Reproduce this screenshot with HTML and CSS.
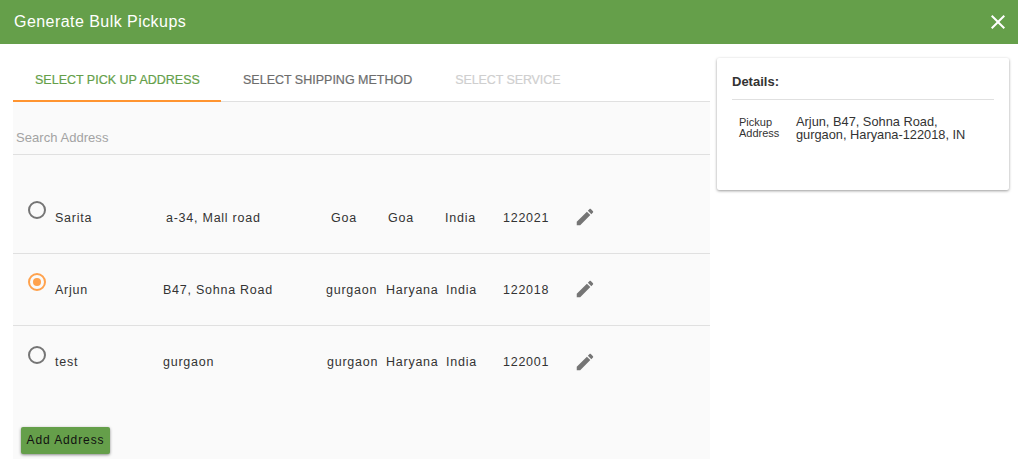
FILE: index.html
```html
<!DOCTYPE html>
<html lang="en">
<head>
<meta charset="utf-8">
<title>Generate Bulk Pickups</title>
<link rel="stylesheet" href="styles.css">
</head>
<body>
<header class="topbar">
  <h1 class="topbar-title">Generate Bulk Pickups</h1>
  <button class="close-btn" aria-label="Close">
    <svg viewBox="0 0 24 24" width="24" height="24"><path d="M19 6.41 17.59 5 12 10.59 6.41 5 5 6.41 10.59 12 5 17.59 6.41 19 12 13.41 17.59 19 19 17.59 13.41 12z"/></svg>
  </button>
</header>
<main class="layout">
  <section class="left">
    <nav class="tabs">
      <div class="tab tab-active">Select Pick Up Address</div>
      <div class="tab tab-normal">Select Shipping Method</div>
      <div class="tab tab-disabled">Select Service</div>
    </nav>
    <div class="panel">
      <div class="search"><span class="search-placeholder">Search Address</span></div>
      <div class="rows">
        <div class="row row-a">
          <span class="radio"></span>
          <span>Sarita</span><span>a-34, Mall road</span><span>Goa</span><span>Goa</span><span>India</span><span>122021</span>
          <svg class="edit" viewBox="0 0 24 24" width="22" height="22"><path d="M3 17.25V21h3.75L17.81 9.94l-3.75-3.75L3 17.25zM20.71 7.04c.39-.39.39-1.02 0-1.41l-2.34-2.34c-.39-.39-1.02-.39-1.41 0l-1.83 1.83 3.75 3.75 1.83-1.83z"/></svg>
        </div>
        <div class="row row-b">
          <span class="radio radio-on"></span>
          <span>Arjun</span><span>B47, Sohna Road</span><span>gurgaon</span><span>Haryana</span><span>India</span><span>122018</span>
          <svg class="edit" viewBox="0 0 24 24" width="22" height="22"><path d="M3 17.25V21h3.75L17.81 9.94l-3.75-3.75L3 17.25zM20.71 7.04c.39-.39.39-1.02 0-1.41l-2.34-2.34c-.39-.39-1.02-.39-1.41 0l-1.83 1.83 3.75 3.75 1.83-1.83z"/></svg>
        </div>
        <div class="row row-c">
          <span class="radio"></span>
          <span>test</span><span>gurgaon</span><span>gurgaon</span><span>Haryana</span><span>India</span><span>122001</span>
          <svg class="edit" viewBox="0 0 24 24" width="22" height="22"><path d="M3 17.25V21h3.75L17.81 9.94l-3.75-3.75L3 17.25zM20.71 7.04c.39-.39.39-1.02 0-1.41l-2.34-2.34c-.39-.39-1.02-.39-1.41 0l-1.83 1.83 3.75 3.75 1.83-1.83z"/></svg>
        </div>
      </div>
      <button class="add-btn">Add Address</button>
    </div>
  </section>
  <aside class="card">
    <h2 class="card-title">Details:</h2>
    <div class="detail">
      <div class="detail-label">Pickup<br>Address</div>
      <div class="detail-value">Arjun, B47, Sohna Road,<br>gurgaon, Haryana-122018, IN</div>
    </div>
  </aside>
</main>
</body>
</html>
```
FILE: styles.css
```css
* { box-sizing: border-box; }
html, body { margin: 0; padding: 0; }
body {
  width: 1018px;
  height: 470px;
  overflow: hidden;
  background: #fff;
  font-family: "Liberation Sans", Arial, sans-serif;
  color: #222;
}
.topbar {
  height: 44px;
  background: #659f4a;
  display: flex;
  align-items: center;
  justify-content: space-between;
  padding: 0 8px 0 14px;
}
.topbar-title {
  margin: 0;
  font-size: 16px;
  font-weight: 400;
  letter-spacing: 0.45px;
  color: #fff;
}
.close-btn {
  width: 24px;
  height: 24px;
  padding: 0;
  border: 0;
  background: none;
  display: flex;
}
.close-btn svg { fill: #fff; }
.layout {
  display: flex;
  align-items: flex-start;
  padding: 14px 9px 0 13px;
  gap: 7px;
}
.left { width: 697px; flex: none; }
.tabs {
  display: flex;
  height: 44px;
  border-bottom: 1px solid #e0e0e0;
}
.tab {
  height: 44px;
  padding: 15px 22px 0;
  font-size: 12.5px;
  line-height: 14px;
  text-transform: uppercase;
  white-space: nowrap;
  -webkit-text-stroke: 0.2px currentColor;
}
.tab-active {
  width: 208px;
  color: #659f4a;
  border-bottom: 2px solid #ff9430;
}
.tab-normal { color: #6d6d6d; }
.tab-disabled { color: #cfcfcf; padding-left: 21px; letter-spacing: -0.1px; }
.panel {
  height: 357px;
  background: #fafafa;
  padding-bottom: 5px;
  display: flex;
  flex-direction: column;
}
.search {
  height: 53px;
  border-bottom: 1px solid #e0e0e0;
  padding: 29px 0 0 3px;
}
.search-placeholder {
  display: block;
  font-size: 13px;
  letter-spacing: 0.05px;
  line-height: 14px;
  color: #a3a3a3;
}
.rows { margin-top: 27px; }
.row {
  display: grid;
  align-items: center;
  height: 72px;
  font-size: 12.5px;
  letter-spacing: 0.75px;
  color: #333;
  border-bottom: 1px solid #e0e0e0;
}
.rows .row:last-child { border-bottom: 0; }
.row-a { grid-template-columns: 42px 111px 165px 57px 57px 58px 71px 22px; }
.row-b { grid-template-columns: 42px 108px 163px 60px 60px 57px 71px 22px; }
.row-c { grid-template-columns: 42px 108px 164px 59px 60px 57px 71px 22px; }
.radio {
  display: block;
  width: 18px;
  height: 18px;
  margin: -15px 0 0 15px;
  border: 2px solid #757575;
  border-radius: 50%;
}
.radio-on {
  border-color: #ffa24d;
  position: relative;
}
.radio-on::after {
  content: "";
  position: absolute;
  left: 3px;
  top: 3px;
  width: 8px;
  height: 8px;
  border-radius: 50%;
  background: #ffa24d;
}
.edit { fill: #757575; margin-bottom: 1px; }
.add-btn {
  width: 89px;
  height: 27px;
  margin: auto 0 0 8px;
  padding: 0 0 2px;
  border: 0;
  border-radius: 2px;
  background: #659f4a;
  color: #111;
  font: 12px "Liberation Sans", Arial, sans-serif;
  letter-spacing: 0.9px;
  box-shadow: 0 1px 3px rgba(0,0,0,.45);
}
.card {
  width: 292px;
  height: 132px;
  padding: 0 15px;
  background: #fff;
  border-radius: 2px;
  box-shadow: 0 1px 3px rgba(0,0,0,.4);
}
.card-title {
  height: 42px;
  margin: 0;
  padding-top: 16px;
  font-size: 13px;
  line-height: 15px;
  font-weight: 700;
  color: #333;
  border-bottom: 1px solid #e0e0e0;
}
.detail {
  display: grid;
  grid-template-columns: 57px 1fr;
  padding: 15px 0 0 7px;
}
.detail-label { font-size: 11px; line-height: 11px; padding-top: 2px; color: #333; }
.detail-value { font-size: 12.8px; line-height: 13px; color: #333; }
```
